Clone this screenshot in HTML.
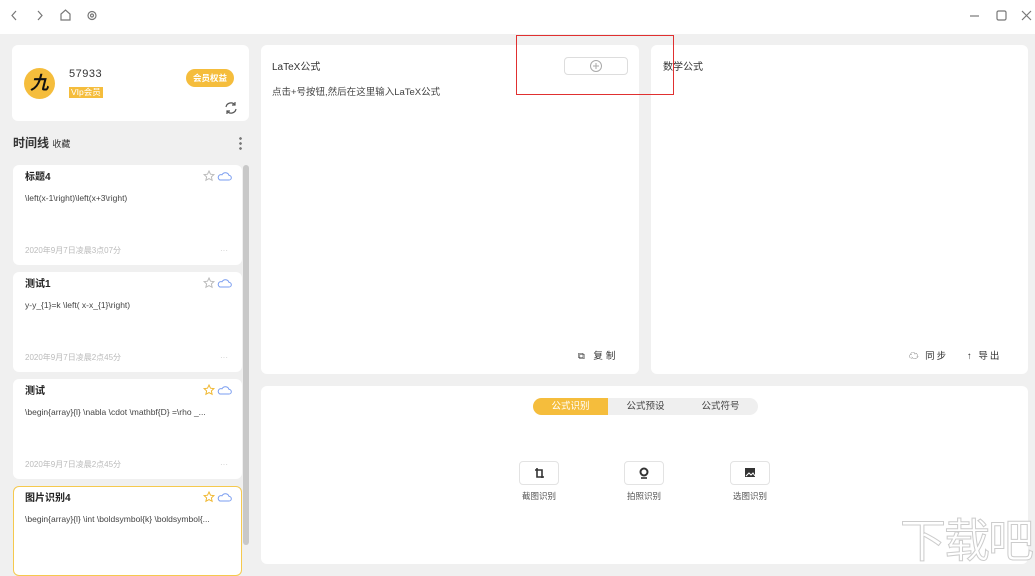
<!DOCTYPE html><html><head><meta charset="utf-8"><style>
*{box-sizing:border-box;margin:0;padding:0}
body{width:1035px;height:571px;background:#f0f0f0;font-family:"Liberation Sans","Noto Sans CJK SC",sans-serif;position:relative;overflow:hidden;color:#333}
.a{position:absolute}
.card{position:absolute;background:#fff;border-radius:6px}
.t{font-size:10px;color:#222;font-weight:bold}
.c{font-size:8.5px;color:#444}
.d{font-size:8px;color:#bbb}
</style></head><body>
<div class="a" style="left:0;top:0;width:1035px;height:34px;background:#fff"></div>
<svg class="a" style="left:0;top:0" width="1035" height="34" fill="none" stroke="#777" stroke-width="1.2">
<path d="M16 11l-4 4.5 4 4.5"/><path d="M38 11l4 4.5-4 4.5"/>
<path d="M61 20v-6l4.5-4 4.5 4v6z"/><circle cx="92" cy="15.5" r="4"/><circle cx="92" cy="15.5" r="1.5"/>
<path d="M970 16h9"/><rect x="997" y="11" width="9" height="9" rx="1.5"/><path d="M1022 11l9 9M1031 11l-9 9"/>
</svg>
<div class="card" style="left:12px;top:45px;width:237px;height:76px"></div>
<div class="a" style="left:24px;top:68px;width:31px;height:31px;border-radius:50%;background:#f5bd3c;font:bold italic 18px 'Liberation Serif',serif;color:#111;text-align:center;line-height:31px">九</div>
<div class="a" style="left:69px;top:68px;font-size:11px;color:#333;letter-spacing:.5px">57933</div>
<div class="a" style="left:69px;top:87px;background:#f5bd3c;color:#fff;font-size:8.5px;padding:0 2px;line-height:11px">VIp会员</div>
<div class="a" style="left:186px;top:69px;width:48px;height:18px;border-radius:9px;background:#f5bd3c;color:#fff;font-size:8.5px;font-weight:bold;text-align:center;line-height:18px">会员权益</div>
<svg class="a" style="left:224px;top:101px" width="14" height="14" fill="none" stroke="#555" stroke-width="1.2"><path d="M2 6a5 5 0 0 1 9-2M12 8a5 5 0 0 1-9 2"/><path d="M11 1v3H8M3 13v-3h3"/></svg>
<div class="a" style="left:13px;top:134px;font-size:12px;font-weight:bold;color:#333">时间线 <span style="font-size:9px;font-weight:normal">收藏</span></div>
<div class="a" style="left:239px;top:136px;width:3px;height:14px;background:radial-gradient(circle,#777 1.2px,transparent 1.5px) 0 0/3px 5px"></div>
<div class="a" style="left:243px;top:165px;width:6px;height:380px;background:#c8c8c8;border-radius:3px"></div>

<div class="card" style="left:13px;top:165px;width:229px;height:100px"></div>
<div class="a t" style="left:25px;top:168px">标题4</div>
<div class="a c" style="left:25px;top:193px">\left(x-1\right)\left(x+3\right)</div>
<div class="a d" style="left:25px;top:245px">2020年9月7日凌晨3点07分</div>
<div class="card" style="left:13px;top:272px;width:229px;height:100px"></div>
<div class="a t" style="left:25px;top:275px">测试1</div>
<div class="a c" style="left:25px;top:300px">y-y_{1}=k \left( x-x_{1}\right)</div>
<div class="a d" style="left:25px;top:352px">2020年9月7日凌晨2点45分</div>
<div class="card" style="left:13px;top:379px;width:229px;height:100px"></div>
<div class="a t" style="left:25px;top:382px">测试</div>
<div class="a c" style="left:25px;top:407px">\begin{array}{l} \nabla \cdot \mathbf{D} =\rho _...</div>
<div class="a d" style="left:25px;top:459px">2020年9月7日凌晨2点45分</div>
<div class="card" style="left:13px;top:486px;width:229px;height:90px;border:1px solid #f5c94e"></div>
<div class="a t" style="left:25px;top:489px">图片识别4</div>
<div class="a c" style="left:25px;top:514px">\begin{array}{l} \int \boldsymbol{k} \boldsymbol{...</div>
<svg class="a" style="left:200px;top:168px" width="36" height="340" fill="none" stroke-width="1">
<g id="s"><path d="M9 3l1.5 3.2 3.4.4-2.5 2.3.7 3.4L9 10.6 5.9 12.3l.7-3.4L4.1 6.6l3.4-.4z" stroke="#bbb"/><path d="M20 12h9a2.3 2.3 0 0 0 0-4.6 3.8 3.8 0 0 0-7-.6A2.7 2.7 0 0 0 20 12z" stroke="#7a9df0"/></g>
<use href="#s" y="107"/><g transform="translate(0,214)"><path d="M9 3l1.5 3.2 3.4.4-2.5 2.3.7 3.4L9 10.6 5.9 12.3l.7-3.4L4.1 6.6l3.4-.4z" stroke="#f0b72f"/><path d="M20 12h9a2.3 2.3 0 0 0 0-4.6 3.8 3.8 0 0 0-7-.6A2.7 2.7 0 0 0 20 12z" stroke="#7a9df0"/></g>
<g transform="translate(0,321)"><path d="M9 3l1.5 3.2 3.4.4-2.5 2.3.7 3.4L9 10.6 5.9 12.3l.7-3.4L4.1 6.6l3.4-.4z" stroke="#f0b72f"/><path d="M20 12h9a2.3 2.3 0 0 0 0-4.6 3.8 3.8 0 0 0-7-.6A2.7 2.7 0 0 0 20 12z" stroke="#7a9df0"/></g>
<text x="20" y="85" font-size="8" fill="#ccc">···</text><text x="20" y="192" font-size="8" fill="#ccc">···</text><text x="20" y="299" font-size="8" fill="#ccc">···</text>
</svg>

<div class="card" style="left:261px;top:45px;width:378px;height:329px"></div>
<div class="a" style="left:272px;top:58px;font-size:10px;color:#333">LaTeX公式</div>
<div class="a" style="left:272px;top:84px;font-size:9.5px;color:#444">点击+号按钮,然后在这里输入LaTeX公式</div>
<div class="a" style="left:564px;top:57px;width:64px;height:18px;border:1px solid #ddd;border-radius:4px"></div>
<svg class="a" style="left:589px;top:59px" width="14" height="14" fill="none" stroke="#aaa"><circle cx="7" cy="7" r="5.5"/><path d="M7 4v6M4 7h6"/></svg>
<div class="a" style="left:578px;top:348px;font-size:9.5px;color:#333;letter-spacing:3px">⧉ 复制</div>
<div class="card" style="left:651px;top:45px;width:377px;height:329px"></div>
<div class="a" style="left:663px;top:58px;font-size:10px;color:#333">数学公式</div>
<div class="a" style="left:909px;top:348px;font-size:9.5px;color:#333;letter-spacing:2px">☁ 同步</div>
<div class="a" style="left:967px;top:348px;font-size:9.5px;color:#333;letter-spacing:2px">↑ 导出</div>
<div class="a" style="left:516px;top:35px;width:158px;height:60px;border:1.5px solid #e03030;z-index:5"></div>

<div class="card" style="left:261px;top:386px;width:767px;height:178px"></div>
<div class="a" style="left:533px;top:398px;width:225px;height:17px;border-radius:9px;background:#efefef"></div>
<div class="a" style="left:533px;top:398px;width:75px;height:17px;border-radius:9px 0 0 9px;background:#f5bd3c;color:#fff;font-size:9.5px;text-align:center;line-height:17px">公式识别</div>
<div class="a" style="left:608px;top:398px;width:75px;font-size:9.5px;text-align:center;line-height:17px;color:#444">公式预设</div>
<div class="a" style="left:683px;top:398px;width:75px;font-size:9.5px;text-align:center;line-height:17px;color:#444">公式符号</div>
<div class="a" style="left:519px;top:461px;width:40px;height:24px;border:1px solid #e3e3e3;border-radius:4px"></div>
<div class="a" style="left:624px;top:461px;width:40px;height:24px;border:1px solid #e3e3e3;border-radius:4px"></div>
<div class="a" style="left:730px;top:461px;width:40px;height:24px;border:1px solid #e3e3e3;border-radius:4px"></div>
<svg class="a" style="left:519px;top:461px" width="260" height="24" fill="none" stroke="#333" stroke-width="1.6"><path d="M18 7v9h7M16 9h7v8"/><circle cx="125" cy="11" r="3.5" stroke-width="2"/><path d="M122 17h6"/><rect x="226" y="7" width="10" height="9" fill="#333" stroke="none"/><path d="M227 15l3-3 2 2 2-2 2 3" stroke="#fff" stroke-width="1"/></svg>
<div class="a" style="left:519px;top:490px;width:40px;text-align:center;font-size:8.5px;color:#555">截图识别</div>
<div class="a" style="left:624px;top:490px;width:40px;text-align:center;font-size:8.5px;color:#555">拍照识别</div>
<div class="a" style="left:730px;top:490px;width:40px;text-align:center;font-size:8.5px;color:#555">选图识别</div>
<div class="a" style="left:900px;top:505px;font-size:46px;color:#fff;-webkit-text-stroke:1px #ccc;letter-spacing:-2px">下载吧</div>
</body></html>
